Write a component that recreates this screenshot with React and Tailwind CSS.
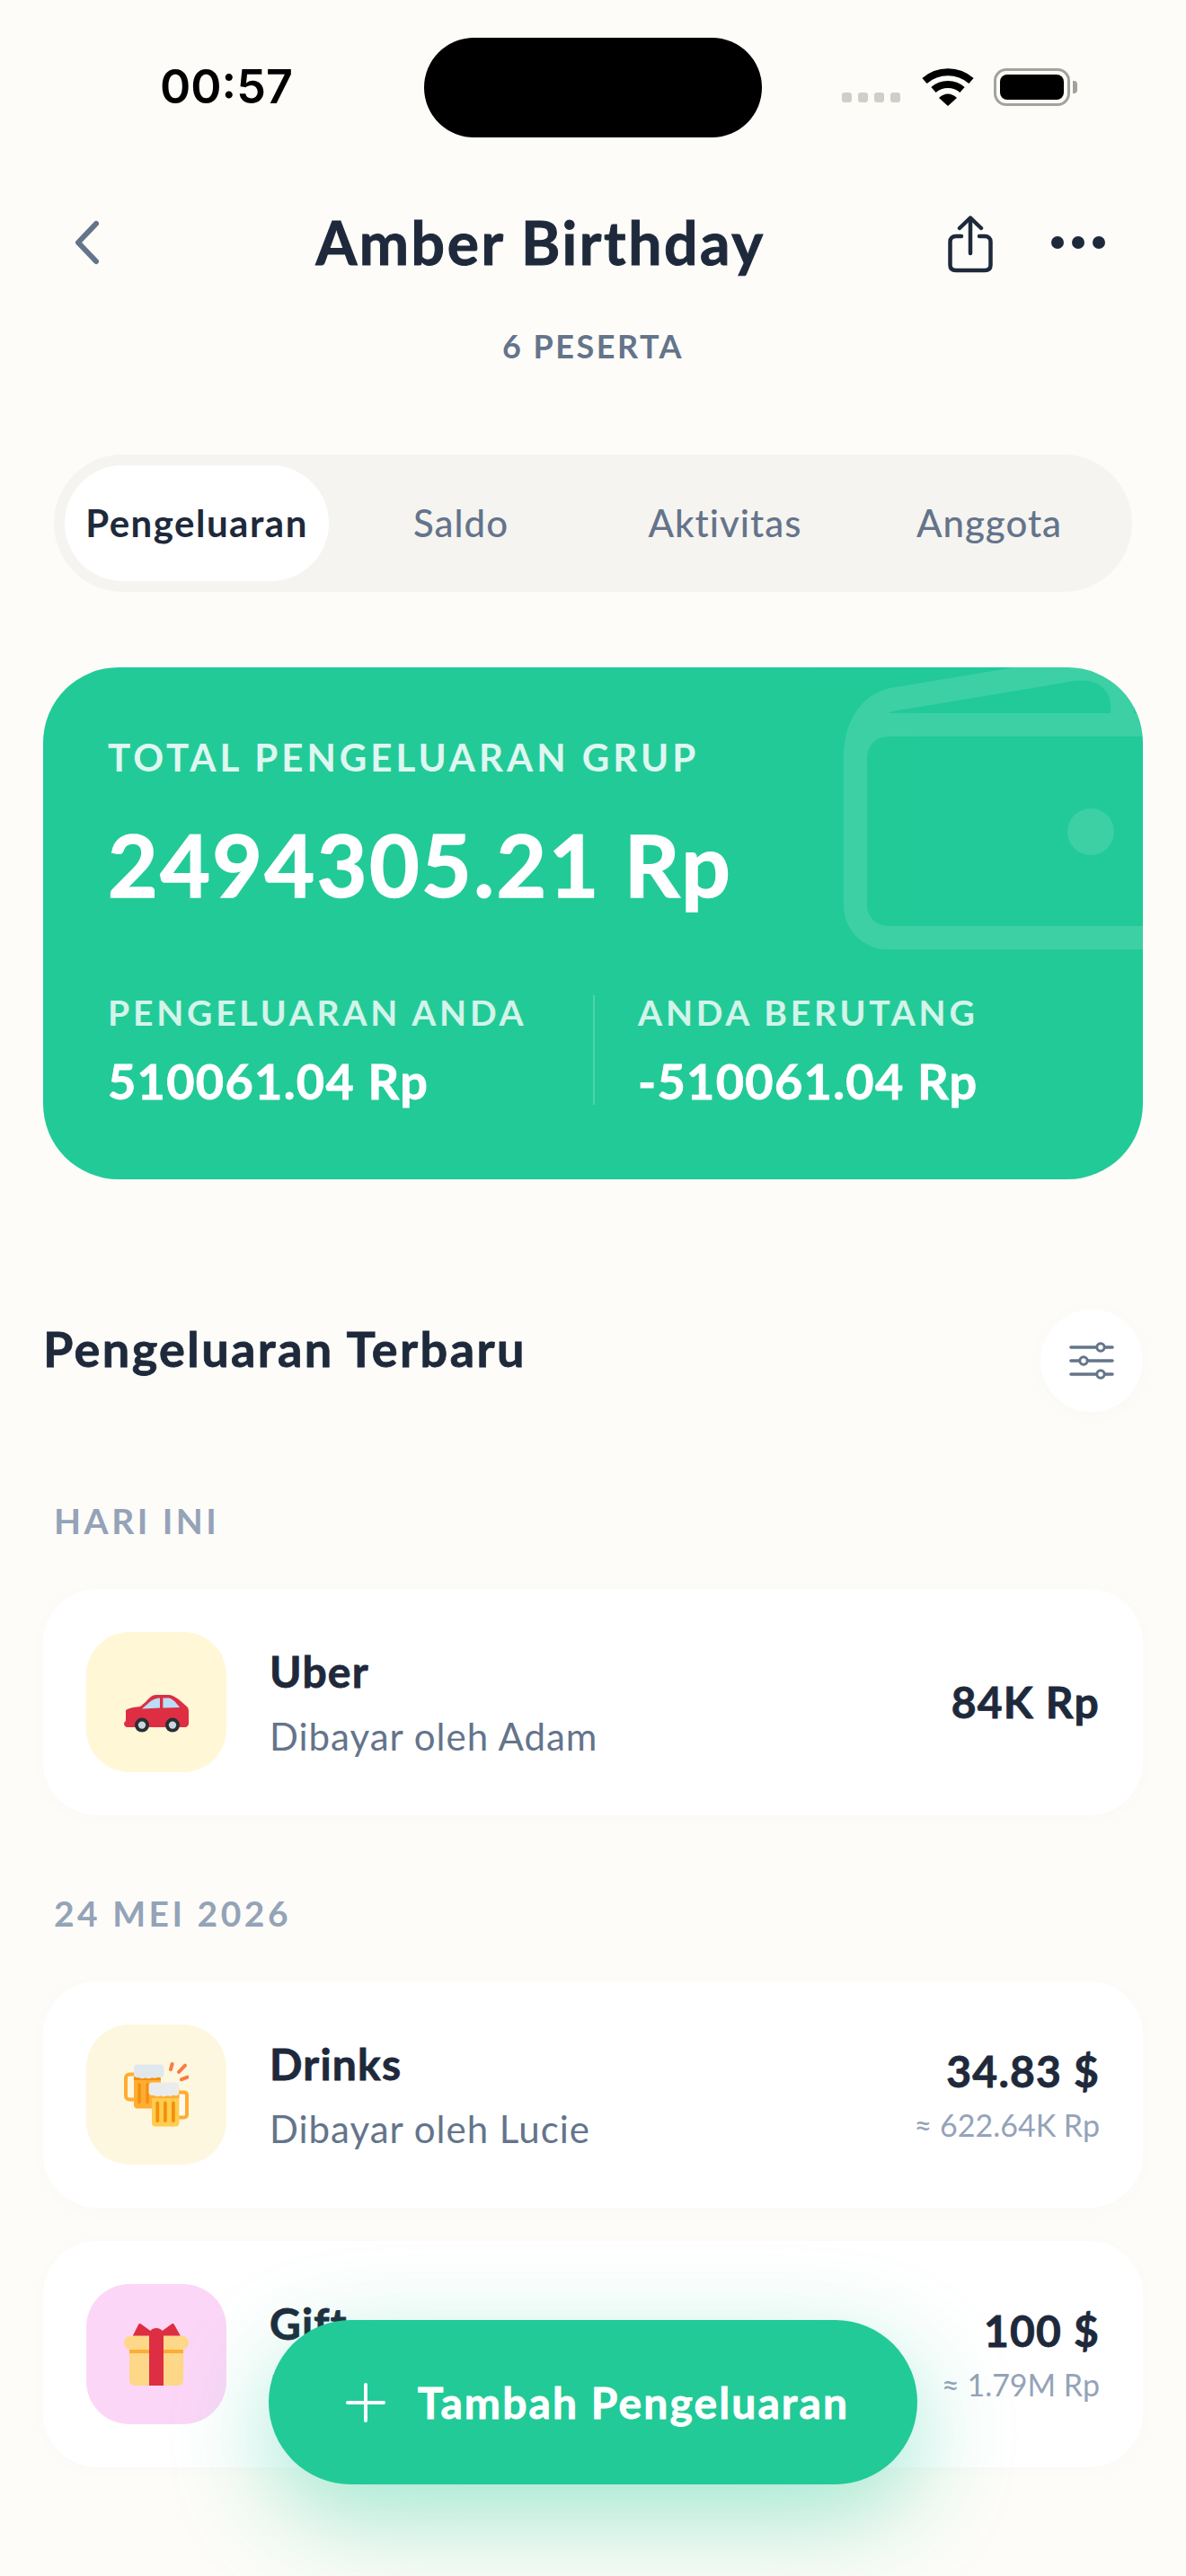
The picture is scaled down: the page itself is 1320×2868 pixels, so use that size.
import React from 'react'

const FONT = 'font-["Lato",sans-serif]'

// Status bar glyphs
function WifiGlyph() {
  return (
    <svg width="58" height="42" viewBox="0 0 58 42" fill="none">
      <path d="M3 14 C18 1 40 1 55 14" stroke="#000" strokeWidth="8" />
      <path d="M13 24 C22 16 36 16 45 24" stroke="#000" strokeWidth="8" />
      <path d="M19 33 L29 42 L39 33 C33 27 25 27 19 33 Z" fill="#000" />
    </svg>
  )
}

function BatteryGlyph() {
  return (
    <div className="flex items-center">
      <div className="w-[85px] h-[42px] rounded-[14px] border-[3px] border-[#a3a29d] p-[4px]">
        <div className="w-full h-full rounded-[8px] bg-black" />
      </div>
      <div className="ml-[3px] w-[5px] h-[14px] rounded-r-[4px] bg-[#a3a29d]" />
    </div>
  )
}

function ShareIcon() {
  return (
    <svg width="50" height="64" viewBox="0 0 50 64" fill="none" stroke="#1e293b" strokeWidth="4.5" strokeLinecap="round" strokeLinejoin="round">
      <path d="M15 23 H9 C5 23 2.5 25.5 2.5 29 V55 C2.5 59 5 61 9 61 H41 C45 61 47.5 59 47.5 55 V29 C47.5 25.5 45 23 41 23 H35" />
      <path d="M25 42 V3" />
      <path d="M13 14 L25 2.5 L37 14" />
    </svg>
  )
}

function FilterIcon() {
  return (
    <svg width="50" height="42" viewBox="0 0 50 42" fill="none" stroke="#64748b" strokeWidth="3.6" strokeLinecap="round">
      <path d="M2 6 H48 M2 21 H48 M2 36 H48" />
      <circle cx="35" cy="6" r="4.2" fill="#fff" strokeWidth="3" />
      <circle cx="16" cy="21" r="4.2" fill="#fff" strokeWidth="3" />
      <circle cx="35" cy="36" r="4.2" fill="#fff" strokeWidth="3" />
    </svg>
  )
}

// Wallet watermark in the corner of the summary card
function WalletMark() {
  return (
    <svg className="absolute right-0 top-0 opacity-[0.12]" width="360" height="360" viewBox="0 0 360 360" fill="none">
      <g stroke="#fff" strokeWidth="26">
        <rect x="40" y="64" width="360" height="237" rx="36" />
        <path d="M40 100 C40 66 56 42 80 36 L284 2 C314 -2 337 16 337 44 V64" />
      </g>
      <circle cx="302" cy="183" r="26" fill="#fff" />
    </svg>
  )
}

function CarEmoji() {
  return (
    <svg width="72" height="72" viewBox="0 0 36 36">
      <path
        fill="#DD2E44"
        d="M1 23 C1 22 3 21.5 5 21 L9 20.5 L12 18 C13.5 16.5 15 14 18 14 H25 C27 14 29 15.5 31 17 L35 20.5 C35.7 21 36 22 36 23 V30 C36 31 35 32 34 32 H2 C0.8 32 0 31 0 30 C0 29 1 29 1 28 Z"
      />
      <path fill="#BBDDF5" d="M10 21.7 L15 17.4 C16.5 16.4 18 15.9 20 15.8 V21.3 Z" />
      <path fill="#BBDDF5" d="M21.7 15.8 H25 C27 16 29.5 19 31 21 L21.7 21.3 Z" />
      <circle cx="10" cy="30.8" r="4" fill="#292F33" />
      <circle cx="10" cy="30.8" r="2.1" fill="#CCD6DD" />
      <circle cx="27" cy="30.8" r="4" fill="#292F33" />
      <circle cx="27" cy="30.8" r="2.1" fill="#CCD6DD" />
    </svg>
  )
}

function BeersEmoji() {
  return (
    <svg width="72" height="72" viewBox="0 0 36 36">
      {/* back mug */}
      <rect x="1" y="6.7" width="7" height="14" rx="2" fill="none" stroke="#FFAC33" strokeWidth="2" />
      <rect x="5.5" y="3" width="15" height="22.8" rx="2" fill="#FFAC33" />
      <rect x="7.7" y="11.5" width="1.7" height="11.5" rx="0.8" fill="#F4900C" />
      <rect x="12.2" y="11.5" width="1.7" height="11.5" rx="0.8" fill="#F4900C" />
      <path fill="#F4900C" d="M5.5 8 H20.5 V10 H5.5 Z" />
      <path fill="#E1E8ED" d="M7 1.2 H20.5 C21.5 1.2 22.2 2 22.2 3 V7 C22.2 8 21 9 20 8.6 C18.5 8 18 9.2 16.5 8.8 C15 8.2 14.5 9.4 13 9 C11.5 8.4 11 9.4 9.5 9 C8.2 8.4 7.5 8.8 6.5 8.4 C5.8 8 5.5 7.5 5.5 7 V3 C5.5 2 6 1.2 7 1.2 Z" />
      {/* front mug */}
      <rect x="29" y="16.7" width="6" height="14" rx="1.5" fill="#FFF9EE" stroke="#FFAC33" strokeWidth="2" />
      <rect x="15.5" y="13" width="15.2" height="22.7" rx="2" fill="#FFCC4D" />
      <rect x="17.7" y="21.8" width="1.9" height="11.7" rx="0.9" fill="#F4900C" />
      <rect x="22" y="21.8" width="1.9" height="11.7" rx="0.9" fill="#F4900C" />
      <rect x="26.5" y="21.8" width="1.9" height="11.7" rx="0.9" fill="#F4900C" />
      <path fill="#FFAC33" d="M15.5 18 H30.7 V20 H15.5 Z" />
      <path fill="#E9EBEC" d="M15.5 11.2 H29 C30 11.2 30.5 12 30.5 13 V17 C30.5 18 29.5 19 28.5 18.6 C27 18 26.5 19.2 25 18.8 C23.5 18.2 23 19.4 21.5 19 C20 18.4 19.5 19.4 18 19 C17 18.4 16 18.6 15 18.4 C14.2 18 13.8 17.5 13.8 17 V13 C13.8 12 14.5 11.2 15.5 11.2 Z" />
      {/* clink sparks */}
      <g stroke="#F97B45" strokeWidth="2" strokeLinecap="round">
        <path d="M26.8 1 L26 4" />
        <path d="M34 1.8 L30.5 5.4" />
        <path d="M35.3 8.3 L32 9.6" />
      </g>
    </svg>
  )
}

function GiftEmoji() {
  return (
    <svg width="72" height="72" viewBox="0 0 36 36">
      <path fill="#DD2E44" d="M5 7.5 L8 1.6 C8.3 1 9 0.8 9.5 1.2 L14.7 5 C16 3 20 3 21.3 5 L26.5 1.2 C27 0.8 27.7 1 28 1.6 L31.3 7.5 V10 H5 Z" />
      <path fill="#FDD888" d="M3 14 H33 V32.5 C33 34.2 31.7 35.5 30 35.5 H6 C4.3 35.5 3 34.2 3 32.5 Z" />
      <rect x="0" y="7.7" width="36" height="7.8" rx="3.9" fill="#FDD888" />
      <rect x="3" y="15.5" width="30" height="2" fill="#FFAC33" />
      <rect x="14" y="5" width="8" height="30.5" fill="#DD2E44" />
    </svg>
  )
}

function ExpenseRow({ tile, emoji, title, payer, amount, converted }) {
  return (
    <div className="flex items-center h-[252px] px-[48px] bg-white rounded-[60px] shadow-[0_3px_24px_rgba(30,41,59,0.015)]">
      <div className={`w-[156px] h-[156px] shrink-0 rounded-[48px] flex items-center justify-center ${tile}`}>
        {emoji}
      </div>
      <div className="ml-[48px] flex-1">
        <div className="text-[48px] leading-[66px] font-bold tracking-[1.2px] [-webkit-text-stroke:0.8px] text-[#1e293b]">{title}</div>
        <div className="mt-[9px] text-[42px] leading-[60px] tracking-[1px] text-[#64748b]">{payer}</div>
      </div>
      <div className="text-right">
        <div className="text-[48px] leading-[66px] font-bold tracking-[1.2px] [-webkit-text-stroke:0.8px] text-[#1e293b]">{amount}</div>
        {converted && <div className="mt-[2px] text-[34px] leading-[50px] text-[#94a3b8]">{converted}</div>}
      </div>
    </div>
  )
}

function Stat({ label, value, className }) {
  return (
    <div className={className}>
      <div className="text-[39px] leading-[50px] font-bold tracking-[3.8px] text-white/80">{label}</div>
      <div className="mt-[17px] text-[54px] leading-[70px] font-bold tracking-[1.3px] [-webkit-text-stroke:0.8px] text-white">{value}</div>
    </div>
  )
}

export default function App() {
  const tabs = ['Pengeluaran', 'Saldo', 'Aktivitas', 'Anggota']

  return (
    <div className={`relative w-[1320px] h-[2868px] overflow-hidden bg-[#fdfcf8] ${FONT}`}>
      {/* Status bar */}
      <div className="flex items-center h-[194px] pl-[178px]">
        <span className='w-[294px] font-["Inter",sans-serif] text-[52px] font-semibold leading-none text-black'>00:57</span>
        <div className="w-[376px] h-[111px] rounded-[56px] bg-black" />
        <div className="ml-[89px] mt-[22px] flex gap-[7px]">
          <i className="w-[11px] h-[11px] rounded-[3px] bg-[#cfcec9]" />
          <i className="w-[11px] h-[11px] rounded-[3px] bg-[#cfcec9]" />
          <i className="w-[11px] h-[11px] rounded-[3px] bg-[#cfcec9]" />
          <i className="w-[11px] h-[11px] rounded-[3px] bg-[#cfcec9]" />
        </div>
        <div className="ml-[24px]"><WifiGlyph /></div>
        <div className="ml-[22px]"><BatteryGlyph /></div>
      </div>

      {/* Header */}
      <div className="flex items-center h-[152px] pl-[80px] pr-[90px]">
        <svg width="32" height="54" viewBox="0 0 32 54" fill="none" stroke="#64748b" strokeWidth="6" strokeLinecap="round" strokeLinejoin="round">
          <path d="M27 6 L7 27 L27 48" />
        </svg>
        <h1 className="flex-1 pl-[36px] text-center text-[66px] leading-none font-bold tracking-[2.6px] [-webkit-text-stroke:1px] text-[#1e293b]">Amber Birthday</h1>
        <div className="mt-[4px]"><ShareIcon /></div>
        <div className="ml-[65px] flex gap-[9px]">
          <i className="w-[14px] h-[14px] rounded-full bg-[#1e293b]" />
          <i className="w-[14px] h-[14px] rounded-full bg-[#1e293b]" />
          <i className="w-[14px] h-[14px] rounded-full bg-[#1e293b]" />
        </div>
      </div>
      <div className="mt-[14px] text-center text-[36px] leading-[50px] font-bold tracking-[2.5px] text-[#64748b]">6 PESERTA</div>

      {/* Tabs */}
      <div className="mt-[96px] mx-[60px] h-[153px] p-[12px] rounded-full bg-[#f6f4f0] grid grid-cols-4">
        {tabs.map((tab, i) => (
          <div
            key={tab}
            className={
              i === 0
                ? 'flex items-center justify-center rounded-full bg-white text-[42px] font-bold tracking-[1.5px] text-[#1e293b]'
                : 'flex items-center justify-center text-[42px] font-medium tracking-[1px] text-[#64748b]'
            }
          >
            {tab}
          </div>
        ))}
      </div>

      {/* Group summary */}
      <div className="relative mt-[84px] mx-[48px] h-[570px] px-[72px] pt-[72px] overflow-hidden rounded-[84px] bg-[#22ca98] text-white">
        <WalletMark />
        <div className="relative text-[42px] leading-[56px] font-bold tracking-[4px] text-white/85">TOTAL PENGELUARAN GRUP</div>
        <div className="relative mt-[26px] text-[96px] leading-[130px] font-bold tracking-[2.5px] [-webkit-text-stroke:1.5px]">2494305.21 Rp</div>
        <div className="relative mt-[75px] flex">
          <Stat label="PENGELUARAN ANDA" value="510061.04 Rp" className="w-[540px]" />
          <div className="mt-[6px] w-[2px] h-[122px] bg-white/20" />
          <Stat label="ANDA BERUTANG" value="-510061.04 Rp" className="pl-[48px]" />
        </div>
      </div>

      {/* Recent expenses */}
      <div className="mt-[145px] mx-[48px] flex items-start justify-between">
        <h2 className="text-[54px] leading-[88px] font-bold tracking-[2.4px] [-webkit-text-stroke:0.8px] text-[#1e293b]">Pengeluaran Terbaru</h2>
        <button className="w-[114px] h-[114px] rounded-full bg-white flex items-center justify-center shadow-[0_3px_24px_rgba(30,41,59,0.02)]">
          <FilterIcon />
        </button>
      </div>

      <div className="mt-[96px] ml-[60px] text-[39px] leading-[50px] font-bold tracking-[3.5px] text-[#94a3b8]">HARI INI</div>
      <div className="mt-[51px] mx-[48px]">
        <ExpenseRow tile="bg-[#fff7d6]" emoji={<CarEmoji />} title="Uber" payer="Dibayar oleh Adam" amount="84K Rp" />
      </div>

      <div className="mt-[84px] ml-[60px] text-[39px] leading-[50px] font-bold tracking-[3.5px] text-[#94a3b8]">24 MEI 2026</div>
      <div className="mt-[51px] mx-[48px] flex flex-col gap-[37px]">
        <ExpenseRow tile="bg-[#fef7e0]" emoji={<BeersEmoji />} title="Drinks" payer="Dibayar oleh Lucie" amount="34.83 $" converted="≈ 622.64K Rp" />
        <ExpenseRow tile="bg-[#fcd6f7]" emoji={<GiftEmoji />} title="Gift" payer="Dibayar oleh Amber" amount="100 $" converted="≈ 1.79M Rp" />
      </div>

      {/* Add expense button */}
      <button className="absolute left-1/2 -translate-x-1/2 bottom-[102px] w-[722px] h-[183px] pl-[10px] rounded-full bg-[#22ca98] flex items-center justify-center gap-[36px] text-white shadow-[0_36px_108px_rgba(34,202,152,0.42)]">
        <svg width="44" height="44" viewBox="0 0 44 44" fill="none" stroke="#fff" strokeWidth="4" strokeLinecap="round">
          <path d="M22 2 V42 M2 22 H42" />
        </svg>
        <span className="text-[48px] font-bold tracking-[2.1px] [-webkit-text-stroke:0.8px]">Tambah Pengeluaran</span>
      </button>
    </div>
  )
}
